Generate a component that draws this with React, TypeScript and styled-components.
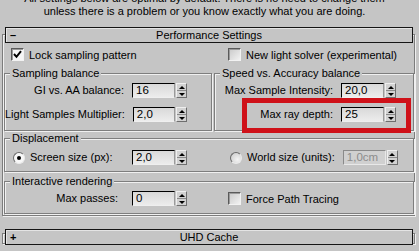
import React from "react";
import styled, { createGlobalStyle } from "styled-components";

// ---------------------------------------------------------------- Global

const GlobalStyle = createGlobalStyle`
  html, body {
    margin: 0;
    padding: 0;
  }
  body {
    background: #c5c5c5;
    font-family: "Liberation Sans", Arial, sans-serif;
    font-size: 11px;
    color: #000;
  }
`;

const BG = "#c5c5c5";

// ---------------------------------------------------------------- Layout

const Page = styled.div`
  width: 419px;
  height: 251px;
  overflow: hidden;
  background: ${BG};
`;

const Intro = styled.div`
  margin-top: -8px;
  padding-right: 10px;
  text-align: center;
  line-height: 13px;
  white-space: nowrap;
`;

const Rollout = styled.section<{ $collapsed?: boolean }>`
  position: relative;
  margin: ${(p) => (p.$collapsed ? "13px" : "9px")} 3px 0 2px;
  padding: 0 2px ${(p) => (p.$collapsed ? 0 : 2)}px;

  &::before {
    content: "";
    position: absolute;
    top: ${(p) => (p.$collapsed ? 4 : 7)}px;
    left: 0;
    right: 1px;
    bottom: ${(p) => (p.$collapsed ? 1 : 0)}px;
    border: 1px solid #7c7c7c;
    box-shadow: inset 1px 1px 0 #efefef, 1px 1px 0 #efefef;
    pointer-events: none;
  }
`;

const RolloutHeader = styled.div`
  position: relative;
  z-index: 1;
  margin: 0 1px;
  height: 14px;
  display: grid;
  grid-template-columns: 24px 1fr 24px;
  align-items: center;
  border: 1px solid #151515;
  box-shadow: inset 1px 1px 0 #e4e4e4;
  background: ${BG};
  line-height: 14px;
`;

const Toggle = styled.span`
  padding-left: 4px;
  font-size: 11px;
  font-weight: bold;
`;

const Title = styled.span`
  text-align: center;
`;

const Columns = styled.div<{ $top: number }>`
  display: grid;
  grid-template-columns: 208px 200px;
  column-gap: 2px;
  margin-top: ${(p) => p.$top}px;
`;

const CheckCell = styled.label<{ $indent: number }>`
  display: flex;
  align-items: center;
  gap: 5px;
  height: 13px;
  padding-left: ${(p) => p.$indent}px;
`;

const Group = styled.div<{ $top?: number; $bottom: number }>`
  position: relative;
  margin-top: ${(p) => p.$top ?? 0}px;
  padding-bottom: ${(p) => p.$bottom}px;
  border: 1px solid #7e7e7e;
  box-shadow: inset 1px 1px 0 #f0f0f0, 1px 1px 0 #f0f0f0;
`;

const Legend = styled.div`
  width: fit-content;
  margin: -7px 0 0 5px;
  padding: 0 2px;
  background: ${BG};
  line-height: 13px;
`;

const FieldList = styled.div<{ $top: number }>`
  display: flex;
  flex-direction: column;
  gap: 9px;
  margin-top: ${(p) => p.$top}px;
`;

const Split = styled.div<{ $top: number }>`
  display: grid;
  grid-template-columns: 207px 1fr;
  column-gap: 2px;
  margin-top: ${(p) => p.$top}px;
`;

const FieldRow = styled.div<{ $start?: number; $end: number }>`
  display: flex;
  align-items: center;
  height: 15px;
  padding-left: ${(p) => p.$start ?? 0}px;
  padding-right: ${(p) => p.$end}px;
`;

const Label = styled.span<{ $align?: "left" | "right"; $gap?: number }>`
  flex: 1;
  text-align: ${(p) => p.$align ?? "right"};
  margin-right: ${(p) => p.$gap ?? 8}px;
  white-space: nowrap;
  line-height: 15px;
`;

// ---------------------------------------------------------------- Controls

const NumBox = styled.div<{ $disabled?: boolean }>`
  box-sizing: border-box;
  width: 43px;
  height: 15px;
  padding-left: 3px;
  line-height: 13px;
  border-style: solid;
  border-width: 1px;
  border-color: ${(p) =>
    p.$disabled ? "#8a8a8a #e8e8e8 #e8e8e8 #8a8a8a" : "#000 #9a9a9a #efefef #000"};
  background: ${(p) =>
    p.$disabled ? "#d0d0d0" : "linear-gradient(#d9d9d9, #ececec)"};
  color: ${(p) => (p.$disabled ? "#8c8c8c" : "#000")};
  font-size: 11.5px;
`;

const Spinner = styled.div`
  display: flex;
  flex-direction: column;
  width: 11px;
  height: 15px;
  margin-left: 1px;
  box-sizing: border-box;
  border: 1px solid;
  border-color: #efefef #6e6e6e #6e6e6e #efefef;
  background: #d2d2d2;
`;

const SpinHalf = styled.div<{ $down?: boolean }>`
  flex: 1;
  display: flex;
  align-items: center;
  justify-content: center;
  border-top: ${(p) => (p.$down ? "1px solid #8a8a8a" : "none")};

  &::after {
    content: "";
    border-left: 3px solid transparent;
    border-right: 3px solid transparent;
    ${(p) =>
      p.$down ? "border-top: 3px solid #000;" : "border-bottom: 3px solid #000;"}
  }
`;

const CheckBox = styled.span<{ $checked?: boolean }>`
  box-sizing: border-box;
  width: 13px;
  height: 13px;
  display: flex;
  align-items: center;
  justify-content: center;
  border: 1px solid;
  border-color: #5a5a5a #f2f2f2 #f2f2f2 #5a5a5a;
  box-shadow: inset 1px 1px 0 #9a9a9a;
  background: ${(p) =>
    p.$checked ? "#f6f6f6" : "linear-gradient(135deg, #c9c9c9, #f2f2f2)"};
`;

const Radio = styled.span<{ $checked?: boolean }>`
  box-sizing: border-box;
  flex: none;
  width: 12px;
  height: 12px;
  margin-right: 5px;
  border-radius: 50%;
  display: flex;
  align-items: center;
  justify-content: center;
  border: 1px solid;
  border-color: #6a6a6a #eaeaea #eaeaea #6a6a6a;
  background: ${(p) =>
    p.$checked ? "#f8f8f8" : "radial-gradient(circle at 65% 65%, #f4f4f4, #c8c8c8)"};

  &::after {
    content: "";
    display: ${(p) => (p.$checked ? "block" : "none")};
    width: 4px;
    height: 4px;
    border-radius: 50%;
    background: #000;
  }
`;

const Highlight = styled.div`
  position: absolute;
  left: 27px;
  top: 24px;
  width: 169px;
  height: 35px;
  box-sizing: border-box;
  border: 5px solid #cf1119;
  pointer-events: none;
`;

// ---------------------------------------------------------------- Parts

const Check = ({ checked }: { checked?: boolean }) => (
  <CheckBox $checked={checked}>
    {checked && (
      <svg width="9" height="9" viewBox="0 0 9 9">
        <polyline
          points="1,4 3.5,6.8 8,1.2"
          fill="none"
          stroke="#000"
          strokeWidth="2"
        />
      </svg>
    )}
  </CheckBox>
);

const Spin = ({ value, disabled }: { value: string; disabled?: boolean }) => (
  <>
    <NumBox $disabled={disabled}>{value}</NumBox>
    <Spinner>
      <SpinHalf />
      <SpinHalf $down />
    </Spinner>
  </>
);

// ---------------------------------------------------------------- App

export default function App() {
  return (
    <Page>
      <GlobalStyle />
      <Intro>
        All settings below are optimal by default. There is no need to change them
        <br />
        unless there is a problem or you know exactly what you are doing.
      </Intro>

      <Rollout>
        <RolloutHeader>
          <Toggle>–</Toggle>
          <Title>Performance Settings</Title>
        </RolloutHeader>

        <Columns $top={5}>
          <CheckCell $indent={7}>
            <Check checked />
            Lock sampling pattern
          </CheckCell>
          <CheckCell $indent={14}>
            <Check />
            New light solver (experimental)
          </CheckCell>
        </Columns>

        <Columns $top={12}>
          <Group $bottom={8}>
            <Legend>Sampling balance</Legend>
            <FieldList $top={3}>
              <FieldRow $end={24}>
                <Label>GI vs. AA balance:</Label>
                <Spin value="16" />
              </FieldRow>
              <FieldRow $end={24}>
                <Label>Light Samples Multiplier:</Label>
                <Spin value="2,0" />
              </FieldRow>
            </FieldList>
          </Group>
          <Group $bottom={8}>
            <Legend>Speed vs. Accuracy balance</Legend>
            <FieldList $top={3}>
              <FieldRow $end={17}>
                <Label>Max Sample Intensity:</Label>
                <Spin value="20,0" />
              </FieldRow>
              <FieldRow $end={17}>
                <Label>Max ray depth:</Label>
                <Spin value="25" />
              </FieldRow>
            </FieldList>
            <Highlight />
          </Group>
        </Columns>

        <Group $top={7} $bottom={6}>
          <Legend>Displacement</Legend>
          <Split $top={5}>
            <FieldRow $start={8} $end={25}>
              <Radio $checked />
              <Label $align="left">Screen size (px):</Label>
              <Spin value="2,0" />
            </FieldRow>
            <FieldRow $start={16} $end={17}>
              <Radio />
              <Label $align="left">World size (units):</Label>
              <Spin value="1,0cm" disabled />
            </FieldRow>
          </Split>
        </Group>

        <Group $top={9} $bottom={7}>
          <Legend>Interactive rendering</Legend>
          <Split $top={3}>
            <FieldRow $end={25}>
              <Label $gap={14}>Max passes:</Label>
              <Spin value="0" />
            </FieldRow>
            <CheckCell $indent={14} style={{ height: 15 }}>
              <Check />
              Force Path Tracing
            </CheckCell>
          </Split>
        </Group>
      </Rollout>

      <Rollout $collapsed>
        <RolloutHeader>
          <Toggle>+</Toggle>
          <Title>UHD Cache</Title>
        </RolloutHeader>
      </Rollout>
    </Page>
  );
}
